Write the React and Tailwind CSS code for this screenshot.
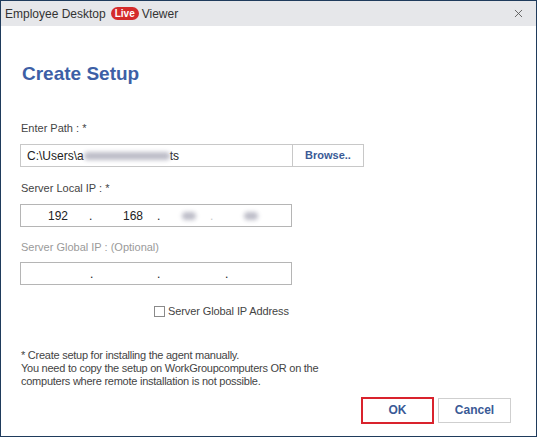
import { X } from 'lucide-react';

const FONT = { fontFamily: '"Liberation Sans", Arial, sans-serif' };

function Blur({ w }) {
  return <span className={`inline-block h-[8px] rounded-sm bg-[#bdbdc8] blur-[2px] ${w}`} />;
}

export default function App() {
  return (
    <div
      style={FONT}
      className="flex h-[437px] w-[537px] flex-col border border-[#1f3b5c] bg-white text-[12px] text-[#333]"
    >
      {/* Title bar */}
      <div className="flex h-[25px] shrink-0 items-center bg-[#e6e7ea] pl-[4px] pr-[11px]">
        <span className="text-[12px] text-[#333]">Employee Desktop</span>
        <span className="ml-[5px] flex h-[13px] items-center rounded-full bg-[#d42b2b] px-[4px] text-[10px] font-bold leading-none text-white">
          Live
        </span>
        <span className="ml-[3px] text-[12px] text-[#333]">Viewer</span>
        <X className="ml-auto h-[13px] w-[13px] text-[#555]" strokeWidth={1.6} />
      </div>

      {/* Body */}
      <div className="flex flex-1 flex-col pl-[19px] pr-[25px]">
        <h1 className="mt-[36px] pl-[2px] text-[19px] font-bold leading-[24px] text-[#3d5fa6]">Create Setup</h1>

        <label className="mt-[35px] pl-[1px] text-[11px] leading-[14px] text-[#444]">Enter Path : *</label>
        <div className="mt-[9px] flex h-[23px]">
          <div className="flex w-[273px] items-center border border-[#c8c8c8] pl-[6px] text-[12px] text-[#222]">
            C:\Users\a
            <Blur w="w-[86px]" />
            ts
          </div>
          <button className="flex w-[71px] items-center justify-center border border-l-0 border-[#c8c8c8] text-[11px] font-bold text-[#3a5a96]">
            Browse..
          </button>
        </div>

        <label className="mt-[14px] pl-[1px] text-[11px] leading-[14px] text-[#444]">Server Local IP : *</label>
        <div className="mt-[9px] flex h-[23px] w-[272px] items-center border border-[#b5b5b5] text-[12px] text-[#222]">
          <span className="w-[27px]" />
          <span className="w-[20px] text-center">192</span>
          <span className="w-[21px]" />
          <span className="w-[4px]">.</span>
          <span className="w-[30px]" />
          <span className="w-[20px] text-center">168</span>
          <span className="w-[14px]" />
          <span className="w-[4px]">.</span>
          <span className="w-[21px]" />
          <Blur w="w-[14px]" />
          <span className="w-[14px]" />
          <span className="w-[4px] text-[#ccc]">.</span>
          <span className="w-[30px]" />
          <Blur w="w-[14px]" />
        </div>

        <label className="mt-[13px] pl-[1px] text-[11px] leading-[14px] text-[#9a9a9a]">Server Global IP : (Optional)</label>
        <div className="mt-[8px] flex h-[23px] w-[272px] items-center border border-[#b5b5b5] text-[12px] text-[#222]">
          <span className="w-[69px]" />
          <span className="w-[4px]">.</span>
          <span className="w-[63px]" />
          <span className="w-[4px]">.</span>
          <span className="w-[64px]" />
          <span className="w-[4px]">.</span>
        </div>

        <div className="mt-[18px] flex items-center pl-[134px]">
          <span className="h-[11px] w-[11px] border border-[#8a8a8a] bg-white" />
          <span className="ml-[3px] text-[11px] tracking-[-0.1px] text-[#444]">Server Global IP Address</span>
        </div>

        <div className="mt-[29px] pl-[1px] text-[11px] leading-[13px] tracking-[-0.25px] text-[#444]">
          <p>* Create setup for installing the agent manually.</p>
          <p>You need to copy the setup on WorkGroupcomputers OR on the</p>
          <p>computers where remote installation is not possible.</p>
        </div>

        <div className="mt-[9px] flex justify-end gap-[4px]">
          <button className="h-[27px] w-[73px] border-2 border-[#d9232d] text-[12px] font-bold text-[#3a5a96]">
            OK
          </button>
          <button className="mt-[1px] h-[25px] w-[73px] border border-[#cfcfcf] text-[12px] font-bold text-[#3a5a96]">
            Cancel
          </button>
        </div>
      </div>
    </div>
  );
}
